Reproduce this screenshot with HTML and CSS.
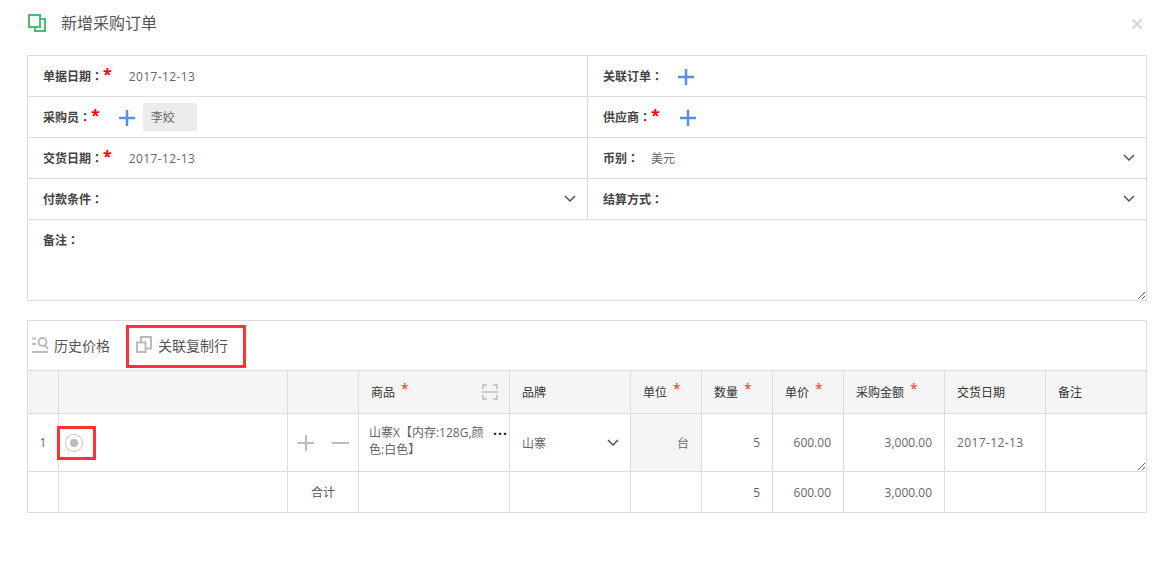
FILE: index.html
```html
<!DOCTYPE html>
<html lang="zh-CN">
<head>
<meta charset="utf-8">
<title>新增采购订单</title>
<link rel="stylesheet" href="styles.css">
</head>
<body>
<main class="dialog">
  <header class="head">
    <svg class="head-icon" width="18" height="18" viewBox="0 0 18 18"><path d="M1 1h11v12H1z M12 5h5v12H7v-4" fill="none" stroke="#4dbb73" stroke-width="2"/></svg>
    <h1 class="title">新增采购订单</h1>
    <svg class="close" width="10" height="10" viewBox="0 0 10 10"><path d="M.5.500l9 9m0-9l-9 9" stroke="#d4d4d4" stroke-width="2" fill="none"/></svg>
  </header>

  <section class="form">
    <div class="field"><span class="label">单据日期<span class="colon" lang="zh-TW">：</span></span><i class="star">*</i><span class="value v-date">2017-12-13</span></div>
    <div class="field"><span class="label">关联订单<span class="colon" lang="zh-TW">：</span></span>
      <svg class="plus p-order" width="16" height="16" viewBox="0 0 16 16"><path d="M8 0v16M0 8h16" stroke="#5b8def" stroke-width="2.500"/></svg></div>
    <div class="field"><span class="label">采购员<span class="colon" lang="zh-TW">：</span></span><i class="star">*</i>
      <svg class="plus p-buyer" width="16" height="16" viewBox="0 0 16 16"><path d="M8 0v16M0 8h16" stroke="#5b8def" stroke-width="2.500"/></svg>
      <span class="tag">李姣</span></div>
    <div class="field"><span class="label">供应商<span class="colon" lang="zh-TW">：</span></span><i class="star">*</i>
      <svg class="plus p-supplier" width="16" height="16" viewBox="0 0 16 16"><path d="M8 0v16M0 8h16" stroke="#5b8def" stroke-width="2.500"/></svg></div>
    <div class="field"><span class="label">交货日期<span class="colon" lang="zh-TW">：</span></span><i class="star">*</i><span class="value v-date">2017-12-13</span></div>
    <div class="field"><span class="label">币别<span class="colon" lang="zh-TW">：</span></span><span class="value v-cur">美元</span>
      <svg class="chev" width="12" height="8" viewBox="0 0 12 8"><path d="M1 1l5 5 5-5" fill="none" stroke="#4a5560" stroke-width="1.500"/></svg></div>
    <div class="field"><span class="label">付款条件<span class="colon" lang="zh-TW">：</span></span>
      <svg class="chev" width="12" height="8" viewBox="0 0 12 8"><path d="M1 1l5 5 5-5" fill="none" stroke="#4a5560" stroke-width="1.500"/></svg></div>
    <div class="field"><span class="label">结算方式<span class="colon" lang="zh-TW">：</span></span>
      <svg class="chev" width="12" height="8" viewBox="0 0 12 8"><path d="M1 1l5 5 5-5" fill="none" stroke="#4a5560" stroke-width="1.500"/></svg></div>
    <div class="field field-note"><span class="label">备注<span class="colon" lang="zh-TW">：</span></span>
      <svg class="grip" width="9" height="9" viewBox="0 0 9 9"><path d="M1 8l7-7M5 8l3-3" stroke="#666" fill="none"/></svg></div>
  </section>

  <section class="lines">
    <div class="toolbar">
      <button class="tool tool-history">
        <svg width="17" height="17" viewBox="0 0 17 17"><path d="M0 2.500h4M0 8h4M0 16h16" stroke="#bbb" stroke-width="2" fill="none"/><circle cx="10.500" cy="6" r="4" stroke="#bbb" stroke-width="2" fill="none"/><path d="M13 9.500l3 3.500" stroke="#bbb" stroke-width="2"/></svg>
        历史价格</button>
      <button class="tool tool-copy">
        <svg width="16" height="17" viewBox="0 0 16 17"><path d="M1 6.500h8.500V16H1z M5 6V1h10v11.500h-5.500" fill="none" stroke="#bbb" stroke-width="2"/></svg>
        关联复制行</button>
    </div>
    <table class="grid">
      <colgroup>
        <col class="c-idx"><col class="c-radio"><col class="c-act"><col class="c-goods"><col class="c-brand"><col class="c-unit"><col class="c-num"><col class="c-num"><col class="c-amt"><col class="c-amt"><col class="c-amt">
      </colgroup>
      <thead>
        <tr>
          <th></th><th></th><th></th>
          <th><div class="th-goods"><span>商品<i class="t-star">*</i></span>
            <svg width="16" height="16" viewBox="0 0 16 16"><path d="M1 5V1h4M11 1h4v4M1 11v4h4M11 15h4v-4M0 8h16" fill="none" stroke="#bbb" stroke-width="1.500"/></svg></div></th>
          <th>品牌</th>
          <th>单位<i class="t-star">*</i></th>
          <th>数量<i class="t-star">*</i></th>
          <th>单价<i class="t-star">*</i></th>
          <th>采购金额<i class="t-star">*</i></th>
          <th>交货日期</th>
          <th>备注</th>
        </tr>
      </thead>
      <tbody>
        <tr class="row-item">
          <td class="center">1</td>
          <td class="cell-radio"><span class="radio-box"><span class="radio"></span></span></td>
          <td class="cell-act">
            <svg width="16" height="16" viewBox="0 0 16 16"><path d="M8 0v16M0 8h16" stroke="#bbb" stroke-width="2"/></svg>
            <svg width="17" height="16" viewBox="0 0 17 16"><path d="M0 8h17" stroke="#bbb" stroke-width="2"/></svg>
          </td>
          <td class="cell-goods"><span class="goods-text">山寨X【内存:128G,颜色:白色】</span><span class="more">...</span></td>
          <td><div class="brand"><span>山寨</span><svg width="12" height="8" viewBox="0 0 12 8"><path d="M1 1l5 5 5-5" fill="none" stroke="#4a5560" stroke-width="1.500"/></svg></div></td>
          <td class="right shaded">台</td>
          <td class="right">5</td>
          <td class="right">600.00</td>
          <td class="right">3,000.00</td>
          <td class="date">2017-12-13</td>
          <td class="cell-note"><svg class="grip" width="9" height="9" viewBox="0 0 9 9"><path d="M1 8l7-7M5 8l3-3" stroke="#666" fill="none"/></svg></td>
        </tr>
        <tr class="row-total">
          <td></td><td></td><td class="center">合计</td><td></td><td></td><td></td>
          <td class="right">5</td>
          <td class="right">600.00</td>
          <td class="right">3,000.00</td>
          <td></td><td></td>
        </tr>
      </tbody>
    </table>
  </section>
</main>
</body>
</html>
```
FILE: styles.css
```css
* { box-sizing: border-box; }
html, body { margin: 0; background: #fff; }
body {
  font-family: "Open Sans", "Noto Sans CJK SC", sans-serif;
  font-size: 12px;
  color: #555;
}
.dialog { width: 1171px; padding: 0 24px 0 27px; }
.head { height: 55px; display: flex; align-items: center; padding: 0 0 9px 1px; }
.head-icon { flex: none; }
.title { margin: 0 0 0 15px; font-size: 16px; font-weight: 400; color: #555; flex: 1; line-height: 20px; }
.close { margin-right: 5px; margin-top: 2px; }

.form {
  width: 1120px; height: 246px;
  border: 1px solid #ddd;
  display: grid;
  grid-template-columns: 560px 1fr;
  grid-template-rows: repeat(4, 41px) 1fr;
}
.field {
  display: flex; align-items: center;
  padding: 0 15px;
  border-bottom: 1px solid #ddd;
  position: relative;
  height: 41px;
}
.field:nth-child(odd):not(.field-note) { border-right: 1px solid #ddd; }
.field-note { grid-column: 1 / -1; height: auto; border-bottom: 0; align-items: flex-start; padding-top: 10px; }
.label { font-weight: 700; color: #444; line-height: 18px; white-space: nowrap; margin-top: 1px; }
.colon { font-family: "Noto Sans CJK TC", sans-serif; }
.star { font-style: normal; color: #f00; font-size: 16px; font-weight: 700; line-height: 14px; align-self: flex-start; margin-top: 11px; }
.value { color: #666; white-space: nowrap; }
.v-date { margin-left: 17px; letter-spacing: .38px; }
.v-cur { margin-left: 12px; }
.plus { flex: none; }
.p-order { margin-left: 15px; margin-top: 2px; }
.p-buyer { margin-left: 19px; margin-top: 2px; }
.p-supplier { margin-left: 20px; margin-top: 2px; }
.tag {
  width: 54px; height: 28px; margin-left: 8px;
  background: #ececec; border-radius: 2px;
  padding-left: 8px; line-height: 29px; color: #666;
}
.chev { margin-left: auto; margin-right: -4px; flex: none; }
.grip { position: absolute; right: 0; bottom: 0; }

.lines { width: 1120px; margin-top: 19px; }
.toolbar {
  height: 50px; border: 1px solid #ddd; border-bottom: 0;
  display: flex; align-items: flex-start;
}
.tool {
  font: inherit; font-size: 14px; color: #555; background: none;
  display: flex; align-items: center; cursor: pointer;
}
.tool-history { border: 0; padding: 0 0 0 4px; height: 47px; gap: 5px; }
.tool-copy { border: 3px solid #f33; margin: 4px 0 0 16px; width: 120px; height: 43px; padding: 0 0 4px 7px; gap: 6px; white-space: nowrap; }

.grid { border-collapse: collapse; table-layout: fixed; width: 1120px; }
.c-idx { width: 31px; }
.c-radio { width: 229px; }
.c-act { width: 71px; }
.c-goods { width: 151px; }
.c-brand { width: 121px; }
.c-unit, .c-num { width: 71px; }
.c-amt { width: 101px; }
th, td { border: 1px solid #ddd; padding: 0 12px; font-weight: 400; text-align: left; }
th { height: 43px; background: #f5f5f5; color: #333; white-space: nowrap; }
.t-star { font-style: normal; color: #f33; margin-left: 6px; font-size: 14px; line-height: 1; position: relative; top: -3px; }
.th-goods { display: flex; justify-content: space-between; align-items: center; margin-right: -1px; }
.row-item td { height: 58px; }
.row-total td { height: 41px; }
td { color: #666; }
.center { text-align: center; padding: 0; }
.right { text-align: right; }
.shaded { background: #f5f5f5; }
.cell-radio { padding: 0; }
.radio-box { display: block; position: relative; z-index: 1; width: 39px; height: 34px; border: 3px solid #f33; margin: 0 0 0 -2px; padding: 5px; }
.radio { display: block; width: 18px; height: 18px; border: 1px solid #c8c8c8; border-radius: 50%; position: relative; }
.radio::after { content: ""; position: absolute; left: 4px; top: 4px; width: 8px; height: 8px; border-radius: 50%; background: #bbb; }
.cell-act { padding: 0 0 0 10px; white-space: nowrap; }
.cell-act svg { vertical-align: middle; margin-right: 15px; }
.cell-act svg:last-child { margin-right: 0; }
.cell-goods { position: relative; padding: 0 22px 4px 10px; line-height: 17px; }
.goods-text { display: block; }
.more { position: absolute; right: 1px; top: 8px; font-weight: 700; color: #222; font-size: 14px; line-height: 16px; letter-spacing: 1px; }
.brand { display: flex; justify-content: space-between; align-items: center; }
.brand svg { margin-right: -1px; }
.date { letter-spacing: .38px; }
.cell-note { position: relative; }
.row-total .center { color: #555; }
```
